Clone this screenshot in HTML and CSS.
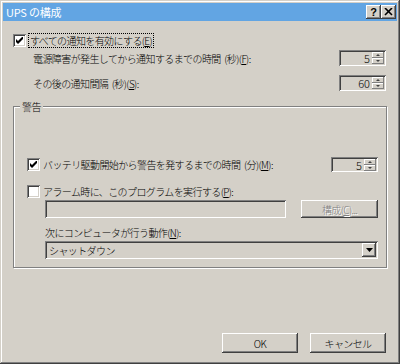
FILE: index.html
```html
<!DOCTYPE html>
<html lang="ja">
<head>
<meta charset="utf-8">
<link rel="stylesheet" href="styles.css">
</head>
<body>
<div class="window">
  <div class="titlebar">
    <span class="title">UPS の構成</span>
    <div class="tbtns">
      <span class="tbtn help">?</span>
      <span class="tbtn close"><svg width="9" height="8" viewBox="0 0 9 8"><path d="M1 0 L8 7 M8 0 L1 7" stroke="#000" stroke-width="1.6"/></svg></span>
    </div>
  </div>
  <div class="content">
    <div class="row r1">
      <span class="cb"><svg width="7" height="7" viewBox="0 0 7 7"><path d="M0 2 L2 4 L7 -1 L7 2 L2 7 L0 5 Z" fill="#000"/></svg></span>
      <span class="label focus">すべての通知を有効にする(<u>E</u>)</span>
    </div>
    <div class="row r2">
      <span class="label ind">電源障害が発生してから通知するまでの時間 (秒)(<u>F</u>):</span>
      <div class="spin"><span class="val">5</span><span class="arrows"><span class="ab"><i class="up"></i></span><span class="ab"><i class="dn"></i></span></span></div>
    </div>
    <div class="row r3">
      <span class="label ind">その後の通知間隔 (秒)(<u>S</u>):</span>
      <div class="spin"><span class="val">60</span><span class="arrows"><span class="ab"><i class="up"></i></span><span class="ab"><i class="dn"></i></span></span></div>
    </div>
    <div class="group">
      <span class="legend">警告</span>
      <div class="row g1">
        <span class="cb"><svg width="7" height="7" viewBox="0 0 7 7"><path d="M0 2 L2 4 L7 -1 L7 2 L2 7 L0 5 Z" fill="#000"/></svg></span>
        <span class="label">バッテリ駆動開始から警告を発するまでの時間 (分)(<u>M</u>):</span>
        <div class="spin"><span class="val">5</span><span class="arrows"><span class="ab"><i class="up"></i></span><span class="ab"><i class="dn"></i></span></span></div>
      </div>
      <div class="row g2">
        <span class="cb"></span>
        <span class="label">アラーム時に、このプログラムを実行する(<u>P</u>):</span>
      </div>
      <div class="row g3">
        <div class="edit"></div>
        <span class="btn disabled">構成(<u>C</u>)...</span>
      </div>
      <div class="row g4">
        <span class="label">次にコンピュータが行う動作(<u>N</u>):</span>
      </div>
      <div class="row g5">
        <div class="combo"><span class="ctext">シャットダウン</span><span class="drop"><svg width="7" height="4" viewBox="0 0 7 4"><path d="M0 0 H7 L3.5 4 Z" fill="#000"/></svg></span></div>
      </div>
    </div>
    <div class="buttons">
      <span class="btn">OK</span>
      <span class="btn">キャンセル</span>
    </div>
  </div>
</div>
</body>
</html>
```

FILE: styles.css
```css
* { box-sizing: border-box; }
html, body { margin: 0; padding: 0; }
body {
  width: 400px;
  height: 364px;
  overflow: hidden;
  background: #d4d0c8;
  font-family: "Noto Sans CJK JP", "Noto Sans", sans-serif;
  font-size: 10px;
  font-weight: 300;
  letter-spacing: -0.6px;
  word-spacing: 2px;
  color: #000;
}
u { text-decoration: underline; text-underline-offset: 1px; }

.window {
  width: 400px;
  height: 364px;
  padding: 3px;
  background: #d4d0c8;
  box-shadow: inset -1px -1px 0 #404040, inset 1px 1px 0 #d4d0c8,
              inset -2px -2px 0 #808080, inset 2px 2px 0 #fff;
  display: flex;
  flex-direction: column;
}

.titlebar {
  height: 18px;
  background: #62a5e3;
  display: flex;
  align-items: center;
  justify-content: space-between;
  padding: 0 1px 0 3px;
  color: #fff;
}
.title { font-size: 11px; font-weight: 400; letter-spacing: -0.2px; word-spacing: 0; line-height: 18px; }
.tbtns { display: flex; }
.tbtn {
  width: 15px;
  height: 14px;
  background: #d4d0c8;
  box-shadow: inset -1px -1px 0 #404040, inset 1px 1px 0 #fff,
              inset -2px -2px 0 #808080;
  display: flex;
  align-items: center;
  justify-content: center;
  color: #000;
}
.help {
  font-family: "Liberation Sans", sans-serif;
  font-weight: bold;
  font-size: 11px;
  letter-spacing: 0;
  line-height: 14px;
}

.content {
  flex: 1;
  display: flex;
  flex-direction: column;
  padding: 0 11px 0 10px;
}

.row { display: flex; align-items: center; }
.label { line-height: 13px; white-space: nowrap; }
.ind { padding-left: 20px; flex: 1; }

.cb {
  width: 13px;
  height: 13px;
  flex: none;
  background: #fff;
  box-shadow: inset 1px 1px 0 #808080, inset -1px -1px 0 #fff,
              inset 2px 2px 0 #404040, inset -2px -2px 0 #d4d0c8;
  display: flex;
  align-items: center;
  justify-content: center;
}
.cb + .label { margin-left: 3px; }
.focus { outline: 1px dotted #000; outline-offset: 0; padding: 0 1px; margin-left: 3px; }

.r1 { margin-top: 13px; height: 13px; }
.r2 { margin-top: 3px; height: 16px; }
.r3 { margin-top: 9px; height: 16px; }

.spin {
  width: 47px;
  height: 16px;
  flex: none;
  margin-left: auto;
  background: #d4d0c8;
  box-shadow: inset 1px 1px 0 #808080, inset -1px -1px 0 #fff,
              inset 2px 2px 0 #404040, inset -2px -2px 0 #d4d0c8;
  display: flex;
  align-items: center;
  padding: 2px;
}
.val {
  flex: 1;
  text-align: right;
  padding-right: 2px;
  letter-spacing: 0;
  font-size: 11px;
  line-height: 12px;
}
.arrows {
  width: 12px;
  height: 12px;
  display: flex;
  flex-direction: column;
}
.ab {
  flex: 1;
  background: #d4d0c8;
  box-shadow: inset -1px -1px 0 #808080, inset 1px 1px 0 #fff;
  display: flex;
  align-items: center;
  justify-content: center;
}
.ab i { display: block; width: 0; height: 0; border-left: 2px solid transparent; border-right: 2px solid transparent; }
.ab .up { border-bottom: 2px solid #404040; }
.ab .dn { border-top: 2px solid #404040; }

.group {
  position: relative;
  margin-top: 15px;
  width: 374px;
  height: 162px;
  border: 1px solid #808080;
  box-shadow: inset 1px 1px 0 #fff, 1px 1px 0 #fff;
  padding: 0 8px 0 13px;
  display: flex;
  flex-direction: column;
}
.legend {
  position: absolute;
  left: 6px;
  top: -7px;
  padding: 0 2px;
  background: #d4d0c8;
  line-height: 13px;
}

.g1 { margin-top: 50px; height: 15px; }
.g1 .spin { height: 15px; }
.g2 { margin-top: 13px; height: 13px; }
.g3 { margin-top: 2px; height: 18px; padding-left: 18px; gap: 15px; }
.g4 { margin-top: 8px; height: 13px; padding-left: 18px; }
.g5 { margin-top: 2px; height: 18px; padding-left: 18px; }

.edit {
  width: 242px;
  height: 18px;
  background: #d4d0c8;
  box-shadow: inset 1px 1px 0 #808080, inset -1px -1px 0 #fff,
              inset 2px 2px 0 #404040, inset -2px -2px 0 #d4d0c8;
}

.btn {
  display: flex;
  align-items: center;
  justify-content: center;
  background: #d4d0c8;
  box-shadow: inset -1px -1px 0 #404040, inset 1px 1px 0 #fff,
              inset -2px -2px 0 #808080;
  white-space: nowrap;
}
.g3 .btn { width: 77px; height: 18px; }
.disabled { color: #808080; text-shadow: 1px 1px 0 #fff; }

.combo {
  width: 333px;
  height: 18px;
  background: #d4d0c8;
  box-shadow: inset 1px 1px 0 #808080, inset -1px -1px 0 #fff,
              inset 2px 2px 0 #404040, inset -2px -2px 0 #d4d0c8;
  display: flex;
  align-items: center;
  padding: 2px;
}
.ctext { flex: 1; padding-left: 2px; line-height: 13px; }
.drop {
  width: 14px;
  height: 14px;
  background: #d4d0c8;
  box-shadow: inset -1px -1px 0 #404040, inset 1px 1px 0 #fff,
              inset -2px -2px 0 #808080;
  display: flex;
  align-items: center;
  justify-content: center;
}

.buttons {
  margin-top: 65px;
  display: flex;
  justify-content: flex-end;
  gap: 12px;
}
.buttons .btn { width: 76px; height: 20px; }
```
